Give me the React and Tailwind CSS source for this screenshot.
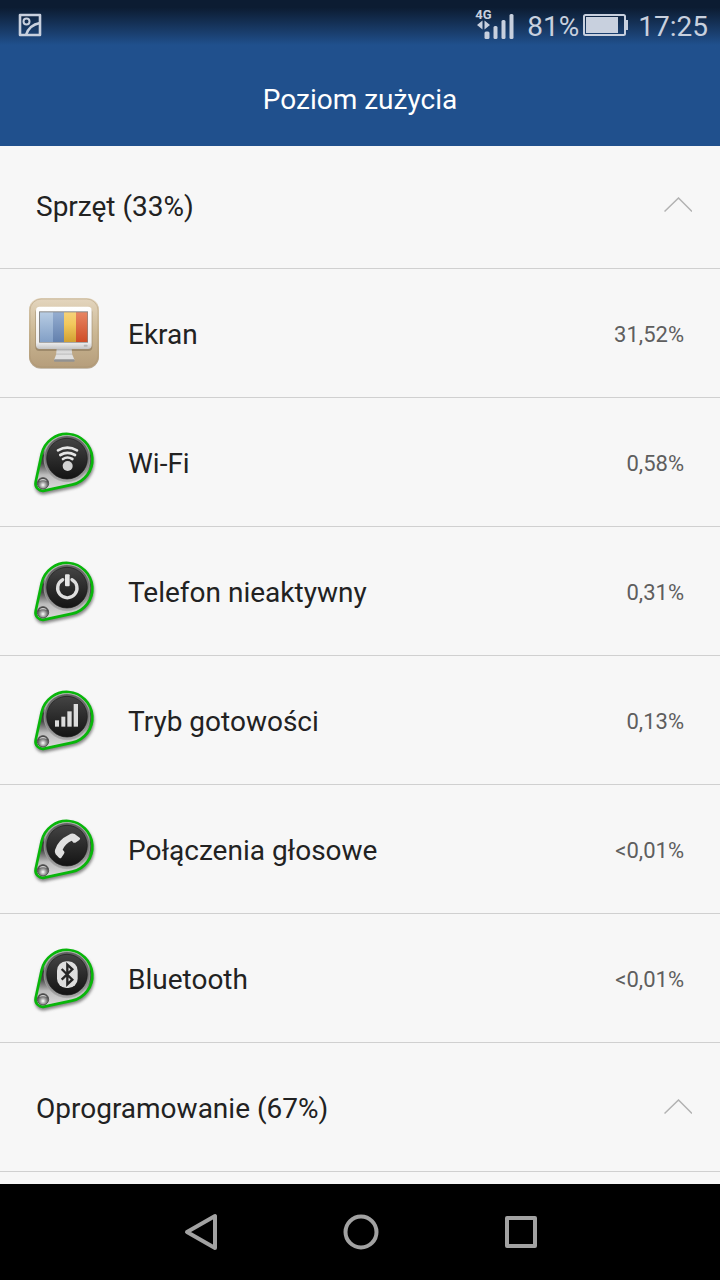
import React, { useState } from 'react';

const hardware = [
  { id: 'screen', name: 'Ekran', usage: '31,52%' },
  { id: 'wifi', name: 'Wi-Fi', usage: '0,58%' },
  { id: 'idle', name: 'Telefon nieaktywny', usage: '0,31%' },
  { id: 'standby', name: 'Tryb gotowości', usage: '0,13%' },
  { id: 'voice', name: 'Połączenia głosowe', usage: '<0,01%' },
  { id: 'bluetooth', name: 'Bluetooth', usage: '<0,01%' },
];

function ScreenIcon() {
  return (
    <svg className="w-[72px] h-[72px]" viewBox="24 36 216 216" aria-hidden="true">
      <defs>
        <linearGradient id="sand" x1="0" y1="0" x2="0" y2="1">
          <stop offset="0" stopColor="#e4d6bf" />
          <stop offset="0.5" stopColor="#cbb793" />
          <stop offset="1" stopColor="#b59d7b" />
        </linearGradient>
        <linearGradient id="frame" x1="0" y1="0" x2="0" y2="1">
          <stop offset="0" stopColor="#ffffff" />
          <stop offset="0.85" stopColor="#eeeeee" />
          <stop offset="1" stopColor="#c4c4c4" />
        </linearGradient>
        <linearGradient id="stand" x1="0" y1="0" x2="0" y2="1">
          <stop offset="0" stopColor="#9c9c9c" />
          <stop offset="0.5" stopColor="#e2e2e2" />
          <stop offset="1" stopColor="#b4b4b4" />
        </linearGradient>
        <linearGradient id="paleBlue" x1="0" y1="0" x2="0" y2="1">
          <stop offset="0" stopColor="#b7cce3" />
          <stop offset="1" stopColor="#829fc6" />
        </linearGradient>
        <linearGradient id="midBlue" x1="0" y1="0" x2="0" y2="1">
          <stop offset="0" stopColor="#94add0" />
          <stop offset="1" stopColor="#6380ad" />
        </linearGradient>
        <linearGradient id="yellow" x1="0" y1="0" x2="0" y2="1">
          <stop offset="0" stopColor="#f6d27a" />
          <stop offset="0.4" stopColor="#f2c85c" />
          <stop offset="1" stopColor="#d1a032" />
        </linearGradient>
        <linearGradient id="orange" x1="0" y1="0" x2="0" y2="1">
          <stop offset="0" stopColor="#e78562" />
          <stop offset="1" stopColor="#cf4d26" />
        </linearGradient>
      </defs>
      <rect x="27" y="41" width="210" height="210" rx="36" fill="#8d7a5e" opacity="0.6" />
      <rect x="27" y="39" width="210" height="210" rx="36" fill="url(#sand)" />
      <rect x="30" y="42" width="204" height="204" rx="34" fill="none" stroke="#a8916f" strokeWidth="3" opacity="0.4" />
      <rect x="46" y="70" width="171" height="128" rx="12" fill="#7b6a50" opacity="0.5" />
      <path d="M110 190h45l2 22H108z" fill="url(#stand)" />
      <path d="M108 209h49l7 17h-62z" fill="#e0e0e0" />
      <rect x="102" y="223" width="62" height="7" rx="3" fill="#929292" />
      <rect x="48" y="65" width="167" height="127" rx="11" fill="url(#frame)" />
      <rect x="57" y="79" width="147" height="94" fill="#858585" />
      <rect x="60" y="82" width="39" height="89" fill="url(#paleBlue)" />
      <rect x="99" y="82" width="33" height="89" fill="url(#midBlue)" />
      <rect x="132" y="82" width="36" height="89" fill="url(#yellow)" />
      <rect x="168" y="82" width="34" height="89" fill="url(#orange)" />
      <rect x="191" y="179" width="12" height="6" rx="3" fill="#b5b5b5" />
    </svg>
  );
}

const glyphs = {
  wifi: (
    <g>
      <g fill="none" stroke="#e6e6e6" strokeWidth="8" strokeLinecap="round">
        <path d="M114 88Q142 72 171 88" />
        <path d="M121 102Q142 89 165 102" />
        <path d="M129 114Q142 105 157 114" />
      </g>
      <circle cx="143" cy="135" r="15" fill="#d2d2d2" />
    </g>
  ),
  idle: (
    <g>
      <path d="M128 89A29 29 0 1 0 156 89" fill="none" stroke="#dedede" strokeWidth="10" strokeLinecap="round" />
      <rect x="135" y="73" width="14" height="36" rx="3" fill="#e6e6e6" />
    </g>
  ),
  standby: (
    <g fill="#dcdcdc">
      <rect x="105" y="124" width="12" height="19" />
      <rect x="124" y="113" width="12" height="30" />
      <rect x="142" y="97" width="13" height="46" />
      <rect x="161" y="75" width="13" height="68" />
    </g>
  ),
  voice: (
    <path
      d="M147 80Q156 74 164 78L180 90Q182 93 177 97L166 104Q161 106 158 101L155 98Q137 105 128 125L132 130Q135 133 132 137L124 149Q122 153 117 149L107 139Q103 134 105 126Q113 96 147 80Z"
      fill="#e0e0e0"
    />
  ),
  bluetooth: (
    <g>
      <rect x="111" y="73" width="62" height="80" rx="28" fill="#dedede" />
      <path d="M125 96L157 128L142 142V83L157 97L125 128" fill="none" stroke="#252525" strokeWidth="7" />
    </g>
  ),
};

function BadgeIcon({ type }) {
  return (
    <svg className="w-[72px] h-[72px] overflow-visible" viewBox="24 15 216 216" aria-hidden="true">
      <defs>
        <linearGradient id="metal" x1="0" y1="0" x2="0" y2="1">
          <stop offset="0" stopColor="#d8d8d8" />
          <stop offset="0.28" stopColor="#a0a0a0" />
          <stop offset="0.38" stopColor="#2e2e2e" />
          <stop offset="0.52" stopColor="#4c4c4c" />
          <stop offset="0.72" stopColor="#bcbcbc" />
          <stop offset="1" stopColor="#dddddd" />
        </linearGradient>
        <linearGradient id="bezel" x1="0" y1="0" x2="0" y2="1">
          <stop offset="0" stopColor="#5e5e5e" />
          <stop offset="0.5" stopColor="#767676" />
          <stop offset="1" stopColor="#a8a8a8" />
        </linearGradient>
        <linearGradient id="disc" x1="0" y1="0" x2="0" y2="1">
          <stop offset="0" stopColor="#444444" />
          <stop offset="0.55" stopColor="#292929" />
          <stop offset="1" stopColor="#141414" />
        </linearGradient>
        <radialGradient id="rivet" cx="0.5" cy="0.65" r="0.6">
          <stop offset="0" stopColor="#ffffff" />
          <stop offset="0.45" stopColor="#999999" />
          <stop offset="1" stopColor="#303030" />
        </radialGradient>
        <filter id="soft" x="-20%" y="-20%" width="140%" height="140%">
          <feGaussianBlur stdDeviation="5" />
        </filter>
      </defs>
      <path
        d="M65 99A77 77 0 1 1 157 191L73 209A22 22 0 0 1 47 183Z"
        transform="translate(2 7)"
        fill="#555555"
        stroke="#555555"
        strokeWidth="8"
        opacity="0.7"
        filter="url(#soft)"
      />
      <path d="M65 99A77 77 0 1 1 157 191L73 209A22 22 0 0 1 47 183Z" fill="url(#metal)" stroke="#08b60a" strokeWidth="8" />
      <circle cx="141" cy="113" r="69" fill="url(#bezel)" stroke="#a9a9a9" strokeWidth="2" />
      <circle cx="141" cy="113" r="61" fill="url(#disc)" stroke="#1b1b1b" strokeWidth="2" />
      <circle cx="69" cy="187" r="17" fill="url(#rivet)" stroke="#555555" strokeWidth="3" />
      <path d="M57 181A13 13 0 0 1 81 181Q69 175 57 181Z" fill="#c9c9c9" />
      {glyphs[type]}
    </svg>
  );
}

function StatusBar() {
  return (
    <div className="flex h-[50px] items-center justify-between bg-linear-to-b from-[#0c1c32] from-15% to-[#20508d] to-90% pr-3 pl-[18px] text-[#c8d0de]">
      <svg className="h-6 w-6" viewBox="0 0 24 24" fill="none" stroke="currentColor" strokeWidth="2.6" strokeLinejoin="round" aria-hidden="true">
        <rect x="2" y="2" width="20" height="20" />
        <circle cx="8.5" cy="8.5" r="3" strokeWidth="2" />
        <path d="M8 22Q11 12 22 10" />
      </svg>
      <div className="flex items-center text-[28px] leading-8">
        <div className="relative mr-3 h-8 w-10">
          <span className="absolute top-0 left-0 text-[13px] leading-3 font-bold">4G</span>
          <svg className="h-8 w-10" viewBox="0 0 40 32" fill="currentColor" aria-hidden="true">
            <path d="M7.500 11.500v9l-5.500-4.500zM9.500 11.500v9l5.500-4.500z" />
            <rect x="9.500" y="22.500" width="5" height="7.500" rx="1.500" />
            <rect x="18.500" y="17" width="4" height="13" rx="1.500" />
            <rect x="26.500" y="11" width="4" height="19" rx="1.500" />
            <rect x="34.500" y="5" width="4" height="25" rx="1.500" />
          </svg>
        </div>
        <span className="pt-1">81%</span>
        <svg className="mr-2 ml-1 h-[22px] w-[47px]" viewBox="0 0 47 22" aria-hidden="true">
          <rect x="1" y="1" width="41" height="20" rx="1.500" fill="none" stroke="currentColor" strokeWidth="2" />
          <rect x="3" y="3" width="32" height="16" fill="currentColor" />
          <rect x="43" y="6" width="2" height="10" fill="currentColor" />
        </svg>
        <span className="pt-1">17:25</span>
      </div>
    </div>
  );
}

function SectionHeader({ title, open, onToggle, className }) {
  return (
    <button
      type="button"
      aria-expanded={open}
      onClick={onToggle}
      className={`flex w-full items-center justify-between border-b border-[#d0d0d0] pr-7 pl-9 text-left text-[28px] leading-8 ${className}`}
    >
      <span className="pt-1">{title}</span>
      <svg
        className={`h-4 w-7 ${open ? '' : 'rotate-180'}`}
        viewBox="0 0 28 16"
        fill="none"
        stroke="#b2b2b2"
        strokeWidth="1.5"
        aria-hidden="true"
      >
        <path d="M0.500 14.500L14.500 1L28 14.500" />
      </svg>
    </button>
  );
}

export default function App() {
  const [hardwareOpen, setHardwareOpen] = useState(true);
  const [softwareOpen, setSoftwareOpen] = useState(true);

  return (
    <div className="flex min-h-screen flex-col bg-[#f7f7f7] font-[Roboto,sans-serif] text-[#222222]">
      <header className="bg-[#20508d] text-white">
        <StatusBar />
        <h1 className="flex h-24 items-center justify-center pt-1 text-[28px] leading-8">Poziom zużycia</h1>
      </header>

      <main className="flex-1">
        <SectionHeader
          title="Sprzęt (33%)"
          open={hardwareOpen}
          onToggle={() => setHardwareOpen(!hardwareOpen)}
          className="h-[123px] pb-1"
        />
        {hardwareOpen && (
          <ul>
            {hardware.map((item) => (
              <li key={item.id} className="flex h-[129px] items-center border-b border-[#d0d0d0] pr-9 pl-7">
                {item.id === 'screen' ? <ScreenIcon /> : <BadgeIcon type={item.id} />}
                <span className="ml-7 flex-1 pt-1 text-[28px] leading-8">{item.name}</span>
                <span className="pt-1 text-[22px] leading-7 text-[#5e5e5e]">{item.usage}</span>
              </li>
            ))}
          </ul>
        )}
        <SectionHeader
          title="Oprogramowanie (67%)"
          open={softwareOpen}
          onToggle={() => setSoftwareOpen(!softwareOpen)}
          className="h-[129px]"
        />
      </main>

      {/* System navigation */}
      <nav className="flex h-24 justify-center bg-black text-[#a2a2a2]">
        <button type="button" aria-label="Wstecz" className="flex w-40 items-center justify-center">
          <svg className="h-10 w-10" viewBox="0 0 40 40" fill="none" stroke="currentColor" strokeWidth="4" strokeLinejoin="round" aria-hidden="true">
            <path d="M35 4V36L7 20Z" />
          </svg>
        </button>
        <button type="button" aria-label="Ekran główny" className="flex w-40 items-center justify-center">
          <svg className="h-10 w-10" viewBox="0 0 40 40" fill="none" stroke="currentColor" strokeWidth="4" aria-hidden="true">
            <circle cx="21" cy="20" r="15.500" />
          </svg>
        </button>
        <button type="button" aria-label="Ostatnie" className="flex w-40 items-center justify-center">
          <svg className="h-10 w-10" viewBox="0 0 40 40" fill="none" stroke="currentColor" strokeWidth="4" strokeLinejoin="round" aria-hidden="true">
            <rect x="7" y="6" width="28" height="28" />
          </svg>
        </button>
      </nav>
    </div>
  );
}
